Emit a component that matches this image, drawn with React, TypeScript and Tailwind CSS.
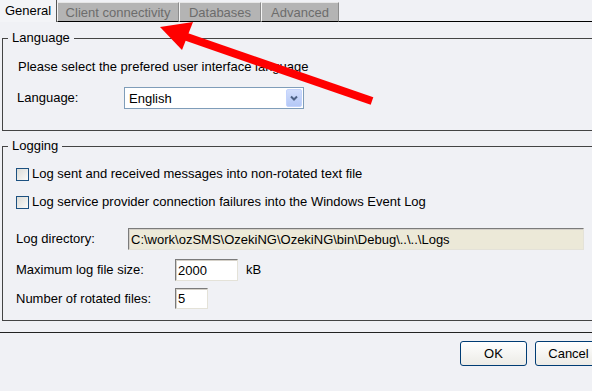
import React from 'react';

const Tab = ({ label, width }: { label: string; width: string }) => (
  <div
    className={`${width} h-[20px] mt-[2px] flex items-center justify-center bg-[#b4b4b4] text-[#6c6c6c] border-l border-t border-l-[#f4f4f4] border-t-[#e6e6e6] border-r border-r-[#8c8c8c] border-b border-b-black leading-none`}
  >
    {label}
  </div>
);

const CheckRow = ({ label }: { label: string }) => (
  <div className="flex items-center h-[16px] mt-[12px]">
    <span className="w-[13px] h-[13px] border border-[#1c5180] bg-gradient-to-br from-[#dcdcd7] to-[#fbfbf9] shrink-0" />
    <span className="ml-[3px] leading-[16px]">{label}</span>
  </div>
);

const TextBox = ({ value, className }: { value: string; className: string }) => (
  <div
    className={`${className} flex items-center pl-[2px] border border-t-[#7b7b7b] border-l-[#7b7b7b] border-b-[#e4e2d8] border-r-[#e4e2d8] shadow-[inset_1px_1px_0_#d4d0c8] leading-none`}
  >
    {value}
  </div>
);

export default function App() {
  return (
    <div className="relative w-[592px] h-[391px] overflow-hidden bg-[#f0f1f5] text-black text-[13px] font-['Liberation_Sans',Arial,sans-serif]">
      {/* Tab strip */}
      <div className="flex h-[22px]">
        <div className="w-[57px] h-[22px] flex items-center justify-center bg-[#f3f4f7] border-r border-r-[#555] leading-none pb-[1px]">
          General
        </div>
        <Tab label="Client connectivity" width="w-[122px]" />
        <Tab label="Databases" width="w-[82px]" />
        <Tab label="Advanced" width="w-[78px]" />
        <div className="flex-1 border-b border-black" />
      </div>

      {/* Language group */}
      <fieldset className="mt-[8px] ml-[2px] -mr-[20px] border border-[#444]">
        <legend className="ml-[5px] px-[4px] leading-[16px]">Language</legend>
        <div className="pl-[13px] pb-[21px]">
          <div className="mt-[13px] leading-[16px] pl-[2px]">Please select the prefered user interface language</div>
          <div className="mt-[12px] flex items-center">
            <span className="w-[108px] pl-[1px]">Language:</span>
            <div className="w-[180px] h-[22px] border border-[#7f9db9] bg-white flex items-center justify-between pl-[4px] pr-[1px]">
              <span className="leading-none">English</span>
              <span className="w-[16px] h-[18px] rounded-[2px] bg-gradient-to-b from-[#d2defc] to-[#b4c8f6] border border-[#c3d3fd] flex items-center justify-center">
                <svg width="8" height="6" viewBox="0 0 8 6">
                  <path d="M1 1.5 L4 4.5 L7 1.5" fill="none" stroke="#4d6185" strokeWidth="2" />
                </svg>
              </span>
            </div>
          </div>
        </div>
      </fieldset>

      {/* Logging group */}
      <fieldset className="mt-[7px] ml-[2px] -mr-[20px] border border-[#444]">
        <legend className="ml-[5px] px-[4px] leading-[16px]">Logging</legend>
        <div className="pl-[13px] pb-[11px]">
          <CheckRow label="Log sent and received messages into non-rotated text file" />
          <CheckRow label="Log service provider connection failures into the Windows Event Log" />
          <div className="mt-[18px] flex items-center">
            <span className="w-[112px]">Log directory:</span>
            <TextBox
              value="C:\work\ozSMS\OzekiNG\OzekiNG\bin\Debug\..\..\Logs"
              className="w-[456px] h-[22px] bg-[#ece9d8]"
            />
          </div>
          <div className="mt-[9px] flex items-center">
            <span className="w-[159px]">Maximum log file size:</span>
            <TextBox value="2000" className="w-[63px] h-[22px] bg-white" />
            <span className="ml-[8px]">kB</span>
          </div>
          <div className="mt-[7px] flex items-center">
            <span className="w-[159px]">Number of rotated files:</span>
            <TextBox value="5" className="w-[33px] h-[21px] bg-white" />
          </div>
        </div>
      </fieldset>

      {/* Separator */}
      <div className="mt-[11px] h-px bg-[#222]" />

      {/* Buttons */}
      <div className="mt-[8px] flex gap-[8px] pl-[460px]">
        <button className="w-[67px] h-[25px] shrink-0 rounded-[3px] border border-[#003c74] bg-gradient-to-b from-white to-[#ecebe6]">
          OK
        </button>
        <button className="w-[67px] h-[25px] shrink-0 rounded-[3px] border border-[#003c74] bg-gradient-to-b from-white to-[#ecebe6]">
          Cancel
        </button>
      </div>

      {/* Red annotation arrow */}
      <svg className="absolute left-0 top-0 pointer-events-none" width="592" height="391">
        <line x1="372" y1="101" x2="184" y2="36" stroke="#ff0000" strokeWidth="8" />
        <polygon points="160,27 193,22 182,50" fill="#ff0000" />
      </svg>
    </div>
  );
}
